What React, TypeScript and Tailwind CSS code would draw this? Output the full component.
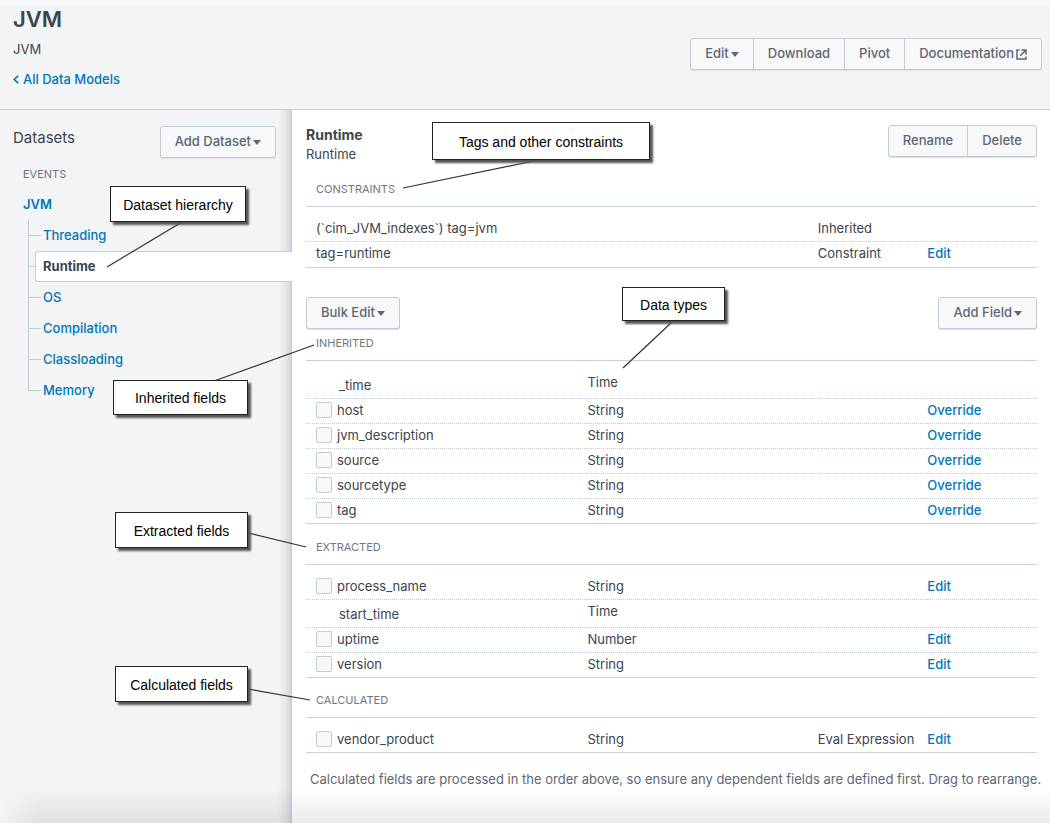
import React from "react";

type Field = {
  name: string;
  type: string;
  flag?: string;
  action?: string;
  locked?: boolean;
};

const inherited: Field[] = [
  { name: "_time", type: "Time", locked: true },
  { name: "host", type: "String", action: "Override" },
  { name: "jvm_description", type: "String", action: "Override" },
  { name: "source", type: "String", action: "Override" },
  { name: "sourcetype", type: "String", action: "Override" },
  { name: "tag", type: "String", action: "Override" },
];

const extracted: Field[] = [
  { name: "process_name", type: "String", action: "Edit" },
  { name: "start_time", type: "Time", locked: true },
  { name: "uptime", type: "Number", action: "Edit" },
  { name: "version", type: "String", action: "Edit" },
];

const calculated: Field[] = [
  { name: "vendor_product", type: "String", flag: "Eval Expression", action: "Edit" },
];

const datasets = ["Threading", "Runtime", "OS", "Compilation", "Classloading", "Memory"];

const button =
  "flex h-8 items-center gap-0.5 border border-[#c3cbd4] bg-[#f7f8fa] px-[14px] text-[13px] font-medium text-[#5c6773] shadow-[0_1px_0_#dde1e6]";

function Caret() {
  return (
    <svg className="h-[5px] w-2" viewBox="0 0 8 5" aria-hidden="true">
      <path d="M0 0h8L4 5z" fill="currentColor" />
    </svg>
  );
}

function ExternalIcon() {
  return (
    <svg className="size-[11px]" viewBox="0 0 11 11" fill="none" stroke="currentColor" strokeWidth="1.5" aria-hidden="true">
      <path d="M3.6 1H1v9h9V7.4M5.4 1H10v4.6M9.8 1.2 4.2 6.8" />
    </svg>
  );
}

function Columns() {
  return (
    <colgroup>
      <col className="w-[38.5%]" />
      <col className="w-[31.5%]" />
      <col className="w-[15%]" />
      <col className="w-[15%]" />
    </colgroup>
  );
}

function SectionTitle({ children, className }: { children: React.ReactNode; className: string }) {
  return (
    <h3 className={`border-b border-[#c9d2de] pb-[9px] pl-[10px] text-[11px] leading-4 text-[#6b7785] ${className}`}>
      {children}
    </h3>
  );
}

const tableClass = "w-full table-fixed border-separate border-spacing-0 text-left text-[13px] leading-5 text-[#3c444d]";
const link = "font-medium text-[#0077b5] hover:underline";

function FieldTable({ label, fields }: { label: string; fields: Field[] }) {
  return (
    <table className={tableClass} aria-label={label}>
      <Columns />
      <tbody>
        {fields.map((f, i) => {
          const first = i === 0;
          const line =
            i === fields.length - 1 ? "border-b border-[#c9d2de]" : "border-b border-dotted border-[#c3cbd4]";
          const cell = `${line} align-top pb-[3px] ${first ? "pt-[11px]" : "pt-px"}`;
          const nameCell = f.locked ? `${line} align-top pb-[3px] ${first ? "pt-[14px]" : "pt-1"}` : cell;
          return (
            <tr key={f.name}>
              <td className={`${nameCell} ${f.locked ? "pl-[33px]" : "pl-[10px]"}`}>
                {f.locked ? (
                  f.name
                ) : (
                  <label className="flex items-center gap-[5px]">
                    <input
                      type="checkbox"
                      className="size-4 appearance-none rounded-xs border border-[#c3cbd4] bg-[#f7f8fa] checked:bg-[#0077b5]"
                    />
                    {f.name}
                  </label>
                )}
              </td>
              <td className={cell}>{f.type}</td>
              <td className={`${cell} whitespace-nowrap`}>{f.flag}</td>
              <td className={cell}>
                {f.action && (
                  <a href="#" className={link}>
                    {f.action}
                  </a>
                )}
              </td>
            </tr>
          );
        })}
      </tbody>
    </table>
  );
}

function Callout({ className, children }: { className: string; children: React.ReactNode }) {
  return (
    <div
      className={`absolute flex items-center justify-center border border-[#222] bg-white pt-0.5 font-['Liberation_Sans',Arial,sans-serif] text-[14px] text-black shadow-[3px_3px_2px_#555] ${className}`}
    >
      {children}
    </div>
  );
}

function Annotations() {
  return (
    <div className="pointer-events-none absolute inset-0 overflow-hidden">
      <svg className="absolute left-0 top-0 h-[823px] w-[1050px]" viewBox="0 0 1050 823" stroke="#333" strokeWidth="1.2" aria-hidden="true">
        <path d="M182 222 107 267M534 161 403 188M672 322 623 368M214 381 314 345M248 533 306 547M248 689 310 700" />
      </svg>
      <Callout className="left-[432px] top-[122px] h-[38px] w-[218px]">Tags and other constraints</Callout>
      <Callout className="left-[110px] top-[186px] h-9 w-[136px]">Dataset hierarchy</Callout>
      <Callout className="left-[622px] top-[287px] h-[34px] w-[103px]">Data types</Callout>
      <Callout className="left-[113px] top-[380px] h-[35px] w-[135px]">Inherited fields</Callout>
      <Callout className="left-[115px] top-[512px] h-[36px] w-[133px]">Extracted fields</Callout>
      <Callout className="left-[115px] top-[666px] h-[36px] w-[133px]">Calculated fields</Callout>
    </div>
  );
}

export default function App() {
  return (
    <div className="relative flex min-h-screen flex-col bg-[#f2f4f5] font-[Inter,sans-serif] text-[13px] text-[#3c444d]">
      <header className="flex items-start justify-between border-b border-t-[6px] border-b-[#c9ced6] border-t-[#f7f8fa] pb-5 pl-[13px] pr-2">
        <div>
          <h1 className="text-[22px] font-semibold leading-[26px]">JVM</h1>
          <p className="mt-[7px] leading-5">JVM</p>
          <a href="#" className={`mt-[10px] flex items-center gap-1 leading-5 ${link}`}>
            <svg className="h-[9px] w-[6px]" viewBox="0 0 6 9" fill="none" stroke="currentColor" strokeWidth="1.6" aria-hidden="true">
              <path d="M5.2.8 1.2 4.5l4 3.7" />
            </svg>
            All Data Models
          </a>
        </div>
        <div className="mt-8 flex">
          <button type="button" className={`${button} rounded-l-[3px]`}>
            Edit
            <Caret />
          </button>
          <button type="button" className={`${button} -ml-px`}>
            Download
          </button>
          <button type="button" className={`${button} -ml-px`}>
            Pivot
          </button>
          <a href="#" className={`${button} -ml-px rounded-r-[3px]`}>
            Documentation
            <ExternalIcon />
          </a>
        </div>
      </header>

      <div className="flex grow">
        <aside className="w-[292px] shrink-0 bg-[linear-gradient(to_left,#c5cad0_0,#d5d9dd_2px,#e6e9eb_7px,#f2f4f5_14px)] pt-4">
          <div className="flex items-start justify-between pl-[13px] pr-4">
            <h2 className="text-[15px] leading-6">Datasets</h2>
            <button type="button" className={`${button} rounded-[3px]`}>
              Add Dataset
              <Caret />
            </button>
          </div>
          <h3 className="mt-2 pl-[23px] text-[11px] leading-4 text-[#6b7785]">EVENTS</h3>
          <a href="#" className="ml-[23px] mt-3 block text-[13px] font-semibold leading-5 text-[#0077b5]">
            JVM
          </a>
          <ul className="mt-1.5 pl-7">
            {datasets.map((name, i) => {
              const selected = name === "Runtime";
              return (
                <li key={name} className="flex h-[31px]">
                  <span className={`flex shrink-0 flex-col ${selected ? "w-[7px]" : "w-[13px]"}`}>
                    <span className="h-4 border-b border-l border-[#c3cbd4]" />
                    {i < datasets.length - 1 && <span className="grow border-l border-[#c3cbd4]" />}
                  </span>
                  <a
                    href="#"
                    className={
                      selected
                        ? "flex grow items-center rounded-l-[3px] border border-r-0 border-[#c9ced6] bg-white pl-[7px] font-bold"
                        : `flex items-center pl-0.5 ${link}`
                    }
                  >
                    {name}
                  </a>
                </li>
              );
            })}
          </ul>
        </aside>

        <main className="min-w-0 grow bg-white pb-8 pl-[14px] pr-[13px] pt-[15px]">
          <div className="flex items-start justify-between">
            <div>
              <h2 className="text-[14px] font-bold leading-[19px]">Runtime</h2>
              <p className="leading-5">Runtime</p>
            </div>
            <div className="flex">
              <button type="button" className={`${button} rounded-l-[3px]`}>
                Rename
              </button>
              <button type="button" className={`${button} -ml-px rounded-r-[3px]`}>
                Delete
              </button>
            </div>
          </div>

          <SectionTitle className="pt-[17px]">CONSTRAINTS</SectionTitle>
          <table className={tableClass} aria-label="Constraints">
            <colgroup>
              <col className="w-[70%]" />
              <col className="w-[15%]" />
              <col className="w-[15%]" />
            </colgroup>
            <tbody>
              <tr>
                <td className="border-b border-dotted border-[#c3cbd4] pb-[3px] pl-[10px] pt-[11px]">
                  (`cim_JVM_indexes`) tag=jvm
                </td>
                <td className="border-b border-dotted border-[#c3cbd4] pb-[3px] pt-[11px]">Inherited</td>
                <td className="border-b border-dotted border-[#c3cbd4] pb-[3px] pt-[11px]" />
              </tr>
              <tr>
                <td className="border-b border-[#c9d2de] pb-1 pl-[10px] pt-px">tag=runtime</td>
                <td className="border-b border-[#c9d2de] pb-1 pt-px">Constraint</td>
                <td className="border-b border-[#c9d2de] pb-1 pt-px">
                  <a href="#" className={link}>
                    Edit
                  </a>
                </td>
              </tr>
            </tbody>
          </table>

          <div className="mt-[29px] flex justify-between">
            <button type="button" className={`${button} rounded-[3px]`}>
              Bulk Edit
              <Caret />
            </button>
            <button type="button" className={`${button} rounded-[3px]`}>
              Add Field
              <Caret />
            </button>
          </div>

          <SectionTitle className="pt-1.5">INHERITED</SectionTitle>
          <FieldTable label="Inherited fields" fields={inherited} />
          <SectionTitle className="pt-[15px]">EXTRACTED</SectionTitle>
          <FieldTable label="Extracted fields" fields={extracted} />
          <SectionTitle className="pt-[14px]">CALCULATED</SectionTitle>
          <FieldTable label="Calculated fields" fields={calculated} />

          <p className="mt-4 pl-1 leading-5 text-[#5c6773] lg:whitespace-nowrap">
            Calculated fields are processed in the order above, so ensure any dependent fields are defined first. Drag
            to rearrange.
          </p>
        </main>
      </div>

      <div className="pointer-events-none absolute bottom-0 left-0 right-0 h-9 bg-linear-to-b from-black/0 to-black/8 mask-[linear-gradient(to_right,transparent,black_40px)]" />
      <Annotations />
    </div>
  );
}
